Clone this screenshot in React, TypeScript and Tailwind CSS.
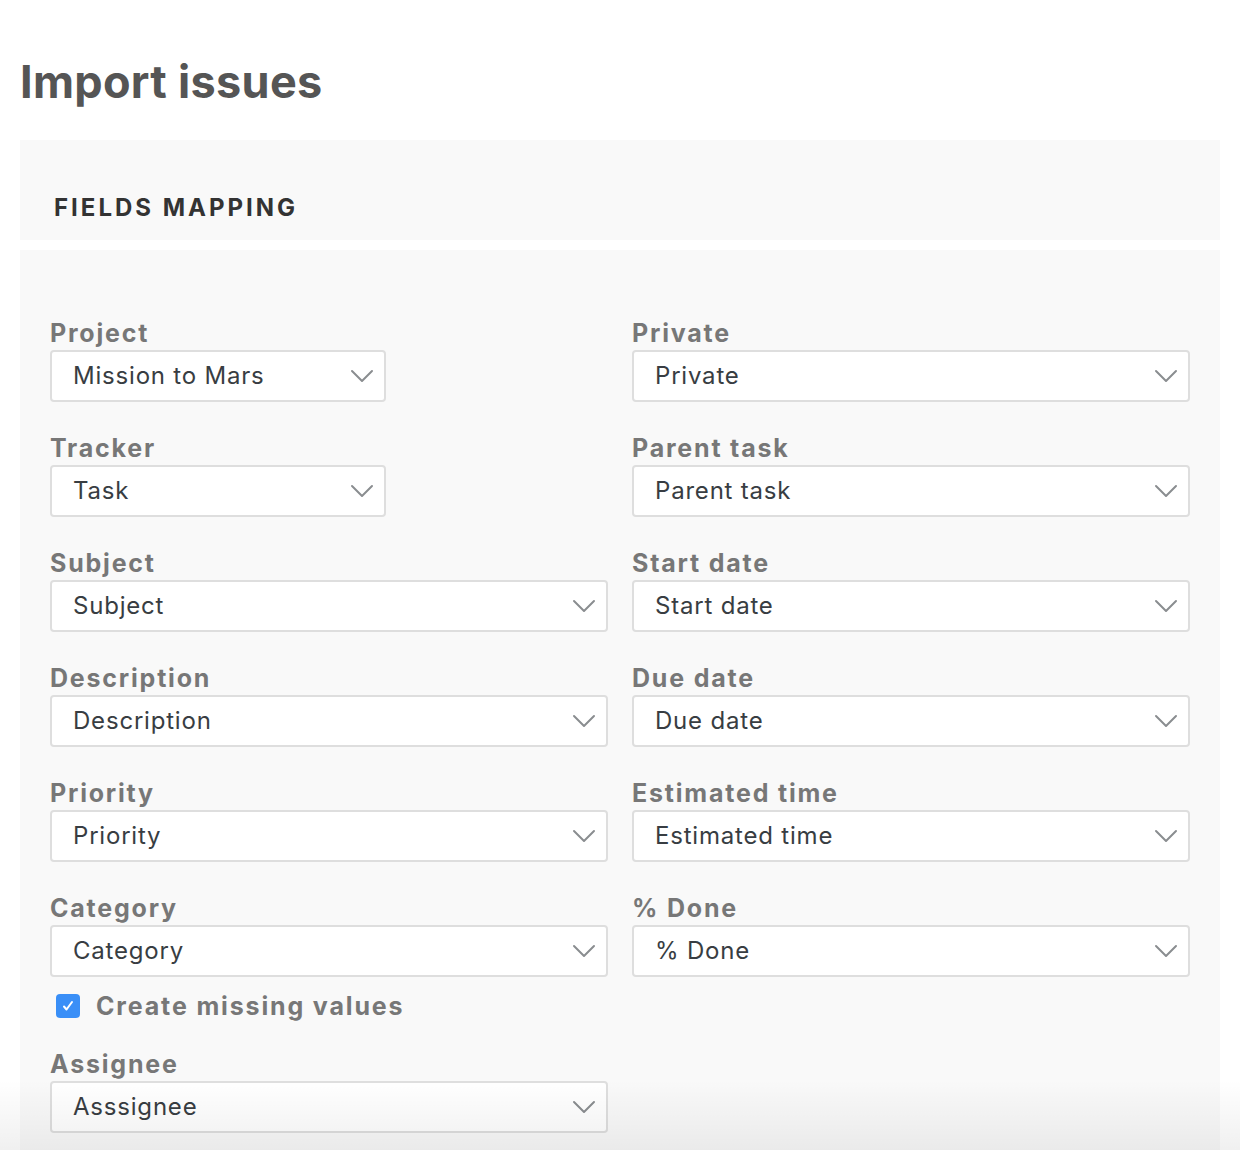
import React from 'react';

const font = { fontFamily: 'Inter, Lato, sans-serif' };

const Chevron = () => (
  <svg width="24" height="14" viewBox="0 0 24 14" fill="none" className="shrink-0">
    <path d="M2 2l10 10L22 2" stroke="#8a8d90" strokeWidth="2" strokeLinecap="round" strokeLinejoin="round" />
  </svg>
);

type FieldProps = { label: string; value: string; narrow?: boolean };

const Field = ({ label, value, narrow }: FieldProps) => (
  <div className="flex flex-col">
    <label className="text-[25px] leading-[34px] font-bold tracking-[1.8px] text-[#777]">{label}</label>
    <div
      className={`${
        narrow ? 'w-[336px]' : 'w-full'
      } h-[52px] bg-white border-2 border-[#dedede] rounded-[4px] flex items-center justify-between pl-[21px] pr-[10px]`}
    >
      <span className="text-[24px] text-[#383d42] tracking-[0.8px]">{value}</span>
      <Chevron />
    </div>
  </div>
);

export default function App() {
  const left: FieldProps[] = [
    { label: 'Project', value: 'Mission to Mars', narrow: true },
    { label: 'Tracker', value: 'Task', narrow: true },
    { label: 'Subject', value: 'Subject' },
    { label: 'Description', value: 'Description' },
    { label: 'Priority', value: 'Priority' },
    { label: 'Category', value: 'Category' },
  ];
  const right: FieldProps[] = [
    { label: 'Private', value: 'Private' },
    { label: 'Parent task', value: 'Parent task' },
    { label: 'Start date', value: 'Start date' },
    { label: 'Due date', value: 'Due date' },
    { label: 'Estimated time', value: 'Estimated time' },
    { label: '% Done', value: '% Done' },
  ];

  return (
    <div className="relative w-[1240px] h-[1150px] overflow-hidden bg-white px-[20px]" style={font}>
      <h1 className="pt-[52px] text-[45px] leading-[60px] font-bold text-[#555] tracking-[0.3px]">Import issues</h1>

      <div className="mt-[28px] h-[100px] bg-[#f9f9f9] pl-[34px] pt-[50px]">
        <h2 className="text-[24px] leading-[36px] font-bold tracking-[3px] text-[#333]">FIELDS MAPPING</h2>
      </div>

      <div className="mt-[10px] h-[920px] bg-[#f9f9f9] px-[30px] pt-[66px]">
        <div className="grid grid-cols-2 gap-x-[24px]">
          <div className="flex flex-col gap-y-[29px]">
            {left.map((f) => (
              <Field key={f.label} {...f} />
            ))}
          </div>
          <div className="flex flex-col gap-y-[29px]">
            {right.map((f) => (
              <Field key={f.label} {...f} />
            ))}
          </div>
        </div>

        <div className="mt-[14px] flex items-center gap-[16px] pl-[6px]">
          <span className="w-[24px] h-[24px] rounded-[4px] bg-[#3a8ff7] flex items-center justify-center">
            <svg width="14" height="14" viewBox="0 0 14 14" fill="none">
              <path d="M3 7.5l2.5 3L11 3" stroke="white" strokeWidth="2" strokeLinecap="round" strokeLinejoin="round" />
            </svg>
          </span>
          <span className="text-[25px] leading-[30px] font-bold tracking-[1.85px] text-[#777]">Create missing values</span>
        </div>

        <div className="mt-[26px] w-[558px]">
          <Field label="Assignee" value="Asssignee" />
        </div>
      </div>

      <div className="pointer-events-none absolute left-0 right-0 bottom-0 h-[70px] bg-gradient-to-b from-transparent to-black/[0.06]" />
    </div>
  );
}
